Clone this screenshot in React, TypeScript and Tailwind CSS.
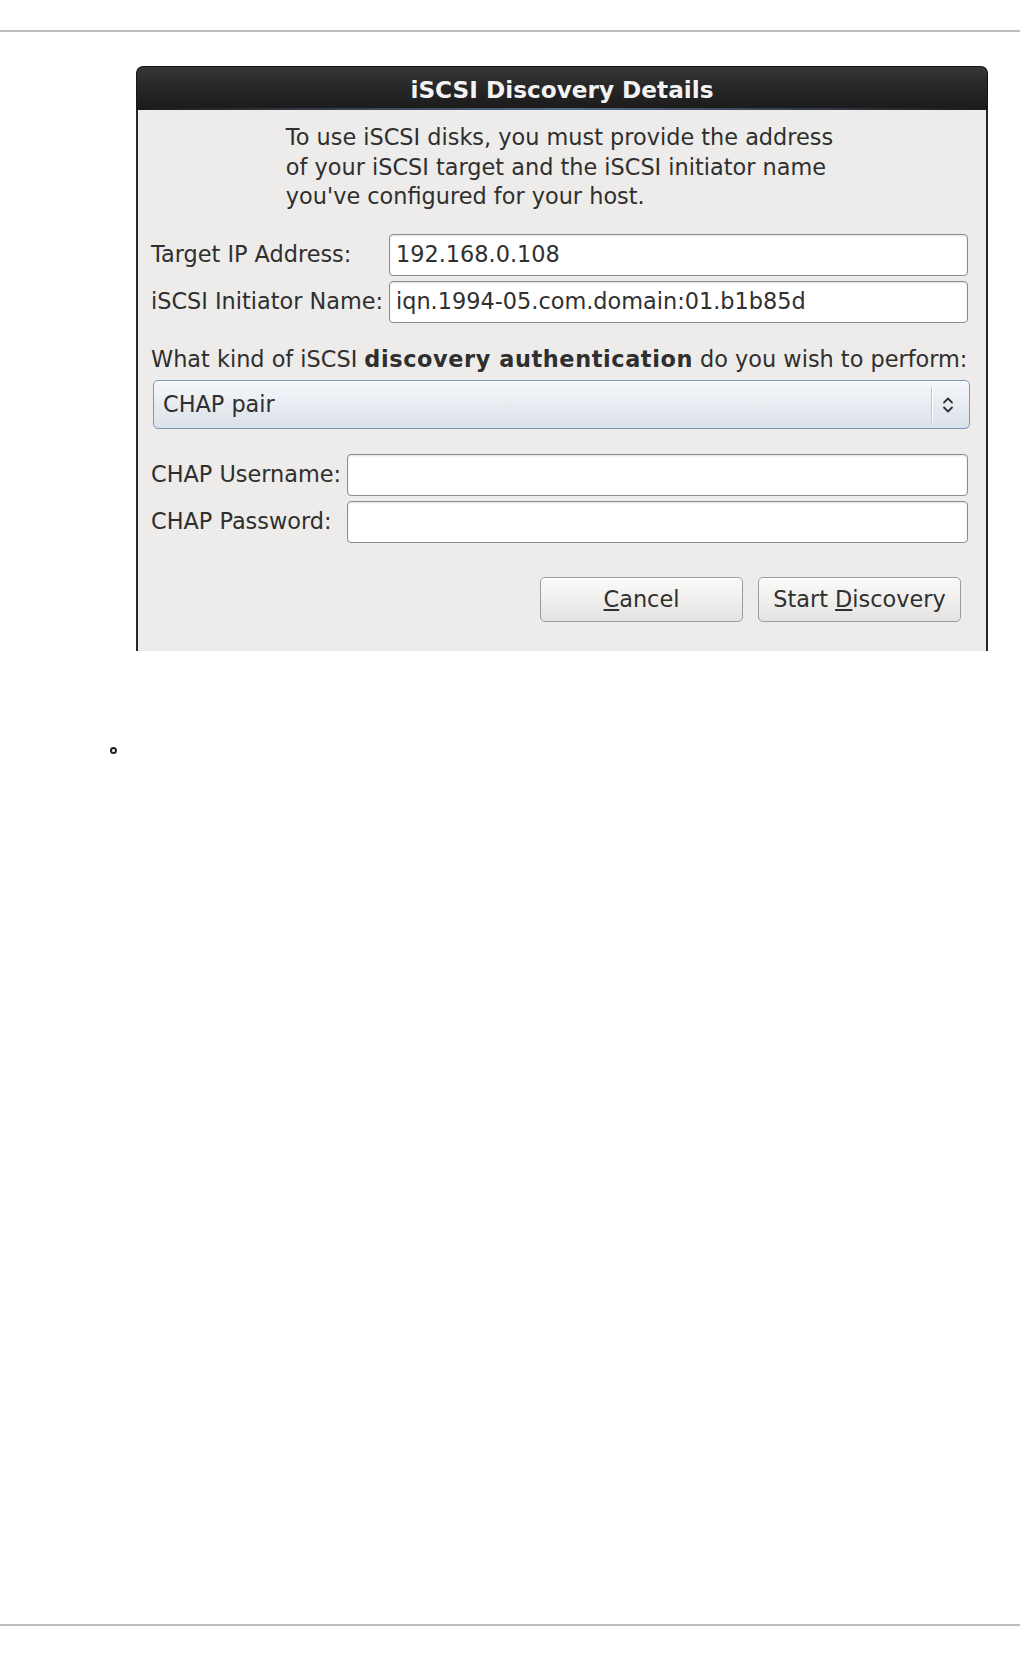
import React from 'react';

const Field = ({ value = '' }: { value?: string }) => (
  <div className="h-[42px] bg-white border border-[#8c8c8c] rounded-[4px] shadow-[inset_0_1px_2px_rgba(0,0,0,0.12)] flex items-center pl-[6px] text-[#303030]">
    {value}
  </div>
);

const DialogButton = ({ children }: { children: React.ReactNode }) => (
  <button className="w-[203px] h-[45px] rounded-[5px] border border-[#9c9c9c] bg-linear-to-b from-[#fbfbfa] to-[#e4e3e1] text-[#303030] flex items-center justify-center shadow-[inset_0_1px_0_#ffffff]">
    {children}
  </button>
);

const App = () => {
  return (
    <div className="w-[1020px] h-[1656px] bg-white flex flex-col font-['DejaVu_Sans',sans-serif] text-[22.4px] leading-[29.5px] text-[#2f2f2f]">
      <div className="h-[30px]" />
      <div className="h-[2px] bg-[#bdbdbd]" />

      {/* iSCSI dialog */}
      <div className="ml-[136px] mt-[34px] w-[852px] h-[585px] flex flex-col">
        <div className="h-[44px] rounded-t-[7px] bg-linear-to-b from-[#363636] via-[#262626] to-[#1b1b1b] border border-b-0 border-[#141414] flex flex-col">
          <div className="flex-1 pt-[4px] flex items-center justify-center text-[23.2px] font-bold text-[#f3f3f3]">
            iSCSI Discovery Details
          </div>
          <div className="h-[2px] bg-linear-to-r from-[#1b1b1b] via-[#56708f] to-[#1b1b1b]" />
        </div>

        <div className="flex-1 bg-[#edecea] border-x-2 border-[#262626] flex flex-col pl-[13px] pr-[18px]">
          <div className="mt-[13px] mx-auto w-fit">
            <p>To use iSCSI disks, you must provide the address</p>
            <p>of your iSCSI target and the iSCSI initiator name</p>
            <p>you've configured for your host.</p>
          </div>

          <div className="mt-[22px] grid grid-cols-[238px_1fr] gap-y-[5px] items-center">
            <span>Target IP Address:</span>
            <Field value="192.168.0.108" />
            <span>iSCSI Initiator Name:</span>
            <Field value="iqn.1994-05.com.domain:01.b1b85d" />
          </div>

          <p className="mt-[22px] whitespace-nowrap">
            What kind of iSCSI <b className="tracking-[0.6px]">discovery authentication</b> do you wish to perform:
          </p>

          <div className="mt-[6px] ml-[2px] -mr-[2px] h-[49px] rounded-[5px] border border-[#7896be] bg-linear-to-b from-[#f5f7fa] to-[#dbe1e9] flex items-center shadow-[inset_0_1px_0_#ffffff]">
            <span className="flex-1 pl-[9px]">CHAP pair</span>
            <div className="w-[2px] h-[36px] border-l border-[#c4c4c4] border-r border-r-white" />
            <div className="w-[30px] mr-[6px] flex items-center justify-center">
              <svg width="12" height="20" viewBox="0 0 12 20" fill="none" stroke="#333" strokeWidth="1.8" strokeLinecap="round" strokeLinejoin="round">
                <path d="M2 7.5 L6 3.5 L10 7.5" />
                <path d="M2 12.5 L6 16.5 L10 12.5" />
              </svg>
            </div>
          </div>

          <div className="mt-[25px] grid grid-cols-[196px_1fr] gap-y-[5px] items-center">
            <span>CHAP Username:</span>
            <Field />
            <span>CHAP Password:</span>
            <Field />
          </div>

          <div className="mt-[34px] mr-[7px] flex justify-end gap-[15px]">
            <DialogButton>
              <span><u>C</u>ancel</span>
            </DialogButton>
            <DialogButton>
              <span>Start <u>D</u>iscovery</span>
            </DialogButton>
          </div>
        </div>
      </div>

      <div className="mt-[96px] ml-[110px] w-[7px] h-[7px] rounded-full border-2 border-[#222]" />

      <div className="mt-auto h-[2px] bg-[#bdbdbd]" />
      <div className="h-[30px]" />
    </div>
  );
};

export default App;
